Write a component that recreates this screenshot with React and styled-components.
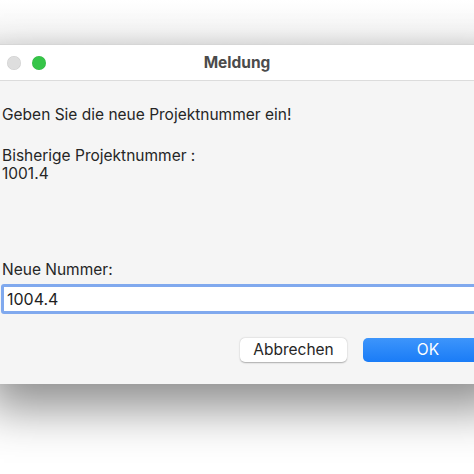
import styled, { createGlobalStyle } from 'styled-components';

const GlobalStyle = createGlobalStyle`
  html, body {
    margin: 0;
    padding: 0;
    background: #ffffff;
    overflow: hidden;
  }
  body {
    font-family: Inter, "Liberation Sans", Arial, sans-serif;
  }
`;

const Page = styled.div`
  width: 474px;
  height: 474px;
  overflow: hidden;
  padding-top: 44px;
  box-sizing: border-box;
  background: linear-gradient(#ffffff 0px, #f6f6f6 30px, #ececec 44px, #ffffff 44px);
`;

const Window = styled.div`
  margin-left: -12px;
  width: 520px;
  border-top: 1px solid #d6d6d6;
  box-shadow: 0 24px 45px rgba(0, 0, 0, 0.45);
  background: #f5f5f5;
`;

const TitleBar = styled.div`
  position: relative;
  height: 35px;
  background: #ffffff;
  border-bottom: 1px solid #dcdcdc;
  display: flex;
  align-items: center;
  justify-content: center;
`;

const Lights = styled.div`
  position: absolute;
  left: 19px;
  top: 11px;
  display: flex;
  gap: 11px;
`;

const Light = styled.span`
  width: 14px;
  height: 14px;
  border-radius: 50%;
  background: ${(p) => p.color};
  box-shadow: inset 0 0 0 0.5px rgba(0, 0, 0, 0.08);
`;

const Title = styled.div`
  font-size: 15.5px;
  font-weight: 700;
  color: #4b4b4b;
  margin-left: -22px;
  margin-top: -1px;
`;

const Body = styled.div`
  padding: 25px 0 22px 14px;
  color: #262626;
  font-size: 15.5px;
  line-height: 18px;
`;

const Line = styled.div`
  margin-bottom: ${(p) => p.gap || 0}px;
`;

const Input = styled.div`
  margin-top: 5px;
  margin-left: -1px;
  height: 24px;
  background: #ffffff;
  border: 3px solid #80a9ee;
  border-radius: 3px;
  display: flex;
  align-items: center;
  padding-left: 3px;
  font-size: 16px;
  color: #1e1e1e;
`;

const Buttons = styled.div`
  display: flex;
  gap: 16px;
  margin-top: 24px;
  padding-left: 238px;
`;

const Button = styled.div`
  height: 24px;
  width: ${(p) => p.w}px;
  border-radius: 5px;
  display: flex;
  align-items: center;
  justify-content: center;
  font-size: 15.5px;
  background: ${(p) => (p.primary ? 'linear-gradient(#3d95fb, #1a7cf7)' : '#ffffff')};
  color: ${(p) => (p.primary ? '#ffffff' : '#262626')};
  box-shadow: ${(p) => (p.primary ? 'none' : '0 0.5px 1.5px rgba(0,0,0,0.3)')};
`;

export default function App() {
  return (
    <>
      <GlobalStyle />
      <Page>
        <Window>
          <TitleBar>
            <Lights>
              <Light color="#dedede" />
              <Light color="#35c548" />
            </Lights>
            <Title>Meldung</Title>
          </TitleBar>
          <Body>
            <Line gap={23}>Geben Sie die neue Projektnummer ein!</Line>
            <Line>Bisherige Projektnummer :</Line>
            <Line gap={78}>1001.4</Line>
            <Line>Neue Nummer:</Line>
            <Input>1004.4</Input>
            <Buttons>
              <Button w={107}>Abbrechen</Button>
              <Button primary w={130}>OK</Button>
            </Buttons>
          </Body>
        </Window>
      </Page>
    </>
  );
}
